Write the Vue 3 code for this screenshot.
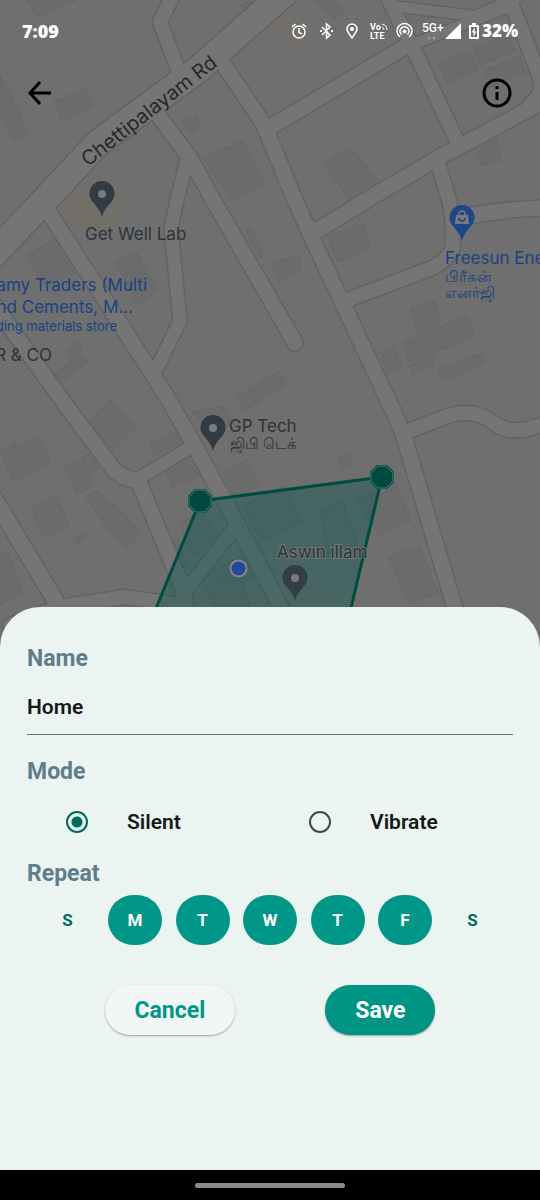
<script setup>
import { ref } from 'vue'

const name = ref('Home')
const mode = ref('silent')
const days = ref([
  { key: 'sun', letter: 'S', label: 'Sunday', on: false },
  { key: 'mon', letter: 'M', label: 'Monday', on: true },
  { key: 'tue', letter: 'T', label: 'Tuesday', on: true },
  { key: 'wed', letter: 'W', label: 'Wednesday', on: true },
  { key: 'thu', letter: 'T', label: 'Thursday', on: true },
  { key: 'fri', letter: 'F', label: 'Friday', on: true },
  { key: 'sat', letter: 'S', label: 'Saturday', on: false },
])

// Road centre lines with their widths
const roads = [
  { w: 26, d: 'M-10 258L45 200L98 143L200 68L290 -12' },
  { w: 14, d: 'M173 -5L160 22L179 72' },
  { w: 15, d: 'M226 68L263 123L295 200L312 238L388 400Q400 425 405 440L456 612' },
  { w: 15, d: 'M272 126L403 48' },
  { w: 14, d: 'M384 -10L414 50L457 141' },
  { w: 10, d: 'M392 6L475 16L520 -4' },
  { w: 11, d: 'M414 44L510 6' },
  { w: 14, d: 'M508 -5L541 80Q544 94 530 105' },
  { w: 15, d: 'M316 231L380 192L440 157L548 99' },
  { w: 14, d: 'M438 163L449 200Q454 220 453 244Q452 258 432 268L350 299' },
  { w: 15, d: 'M453 219Q500 209 545 208' },
  { w: 15, d: 'M160 118L190 158L213 200L278 313L295 343' },
  { w: 13, d: 'M187 160L177 200L171 228L180 321L158 366' },
  { w: 15, d: 'M50 214L169 400L230 510L285 615' },
  { w: 15, d: 'M-8 302L62 400L108 462Q120 480 138 480L165 545L184 592L186 612' },
  { w: 12, d: 'M138 479L194 445' },
  { w: 13, d: 'M182 595L238 524' },
  { w: 16, d: 'M-8 495L55 600' },
  { w: 14, d: 'M10 625L60 607L125 597L180 605' },
  { w: 14, d: 'M404 433L442 418Q472 406 494 423Q512 438 548 422' },
]

const buildings = [
  '26,0 76,0 38,17', '54,102 86,88 94,107 62,121', '8,129 23,122 28,135 14,142', '0,76 23,119 8,127 0,115',
  '183,121 196,114 201,126 189,133', '203,158 242,141 264,184 231,200', '313,-3 332,-3 344,12 334,19',
  '439,63 470,51 478,69 447,83', '474,48 508,34 515,51 481,65', '484,70 520,56 525,72 489,87',
  '324,164 349,146 381,183 351,202', '475,147 496,139 501,160 481,166',
  '26,257 55,238 78,272 45,286', '115,262 135,250 158,291 138,304', '67,350 76,341 83,348 79,355 88,361 63,384 55,374 73,359',
  '327,235 364,224 371,248 337,262', '272,264 298,254 301,261 299,272 279,281', '380,352 393,345 402,367 387,373',
  '411,308 434,300 442,322 418,335', '403,343 467,315 475,337 409,362', '409,366 432,357 434,365 413,375', '437,370 481,353 484,363 442,381',
  '236,397 279,371 287,384 245,410', '88,422 111,400 137,425 112,450', '150,444 182,430 188,441 154,455',
  '0,452 15,441 17,447 39,437 51,463 13,481', '64,466 82,457 93,485 77,494', '82,457 92,453 99,469 88,474',
  '31,507 56,496 63,511 37,524', '37,524 63,511 69,526 44,537', '86,497 97,490 125,515 141,534 127,547 108,529',
  '72,541 83,534 86,539 76,545', '0,555 8,551 23,593 0,605', '165,469 195,454 203,474 172,488',
  '192,412 223,406 232,424 214,433', '223,473 247,459 260,486 234,497', '338,458 349,454 352,466 342,470',
  '180,524 200,511 220,535 193,558', '167,545 178,540 187,567 177,571', '320,508 343,502 358,545 327,556',
  '355,500 395,483 411,521 380,535', '389,557 420,546 438,593 409,604', '207,574 252,550 258,572 218,597',
  '243,505 284,486 304,523 260,541', '205,589 240,570 250,607 215,612', '240,5 262,0 270,8 255,12',
  '246,230 252,230 264,257 260,259',
]

const pins = [
  { x: 102, y: 217, c: '#303b43' },
  { x: 213, y: 451, c: '#303b43' },
  { x: 295, y: 601, c: '#323d44' },
]
</script>

<template>
  <div class="screen">
    <svg class="map" viewBox="0 0 540 660" preserveAspectRatio="xMidYMin slice" role="img" aria-label="Map">
      <rect width="540" height="660" fill="#6f6f6f" />
      <g fill="#6b6b6b" stroke="#676767">
        <polygon v-for="b in buildings" :key="b" :points="b" />
      </g>
      <path d="M268 25L284 10L306 32L294 50Z" fill="#726e68" />
      <path d="M60 207L90 182L120 192L121 225L78 233Z" fill="#726f69" />
      <g fill="none" stroke="#636363" stroke-linecap="round" stroke-linejoin="round">
        <path v-for="r in roads" :key="r.d" :d="r.d" :stroke-width="r.w + 3" />
      </g>
      <g fill="none" stroke="#757575" stroke-linecap="round" stroke-linejoin="round">
        <path v-for="r in roads" :key="r.d" :d="r.d" :stroke-width="r.w" />
      </g>

      <path d="M200 501L382 477L341 650L139 650Z" fill="#00534a" fill-opacity=".36" stroke="#004d40" stroke-width="3" />
      <g v-for="p in [[200, 501], [382, 477]]" :key="p[0]" :transform="`translate(${p[0]} ${p[1]})`">
        <path d="M-5 -12H5L12 -5V5L5 12H-5L-12 5V-5Z" fill="#00493f" />
        <path d="M-4 -11H4L11 -4V4L4 11H-4L-11 4V-4Z" fill="#00493f" stroke="#3f8075" />
      </g>
      <circle cx="238.500" cy="568.500" r="9" fill="#828894" />
      <circle cx="238.500" cy="568.500" r="7" fill="#23479a" />

      <g v-for="p in pins" :key="p.x" :transform="`translate(${p.x} ${p.y})`">
        <path d="M0 0C-2 -8 -6 -11 -10 -16A12.500 12.500 0 1 1 10 -16C6 -11 2 -8 0 0Z" :fill="p.c" />
        <circle cy="-23" r="4" fill="#777b7d" />
      </g>
      <g transform="translate(462 241)">
        <path d="M0 0C-2 -8 -6 -11 -10 -16A12.500 12.500 0 1 1 10 -16C6 -11 2 -8 0 0Z" fill="#1f4687" />
        <path d="M-6 -26H6L7 -17H-7Z" fill="#777b80" />
        <path d="M-3 -26V-27A3 3 0 0 1 3 -27V-26" fill="none" stroke="#777b80" stroke-width="1.500" />
        <path d="M-3 -23A3 3 0 0 0 3 -23" fill="none" stroke="#1f4687" stroke-width="1.500" />
      </g>

      <g class="labels">
        <text class="road-name" transform="translate(88 167) rotate(-38)">Chettipalayam Rd</text>
        <text x="85" y="240">Get Well Lab</text>
        <g class="shop">
          <text x="147" y="291" text-anchor="end">amy Traders (Multi</text>
          <text x="133" y="313" text-anchor="end">nd Cements, M...</text>
          <text class="small" x="117" y="331" text-anchor="end">ding materials store</text>
          <text x="445" y="264">Freesun Ene</text>
          <text class="tamil" x="445" y="282">பிரீசுன்</text>
          <text class="tamil" x="445" y="298">எனர்ஜி</text>
        </g>
        <text x="52" y="361" text-anchor="end">R &amp; CO</text>
        <text x="229" y="432">GP Tech</text>
        <text class="tamil" x="230" y="449">ஜிபி டெக்</text>
        <text class="halo" x="277" y="558">Aswin illam</text>
      </g>
    </svg>

    <header class="top">
      <div class="status">
        <span class="time">7:09</span>
        <div class="indicators">
          <div class="services">
            <svg width="16" height="18" viewBox="0 0 16 18" fill="none" stroke="#fff" stroke-width="1.500">
              <circle cx="8" cy="10" r="6" /><path d="M8 6V10.500L11 12M1 5L4.500 2M15 5L11.500 2" />
            </svg>
            <svg width="15" height="18" viewBox="0 0 15 18" fill="none" stroke="#fff" stroke-width="1.500">
              <path d="M3 5L11 13L7.500 16V2L11 5L3 13" /><path d="M1 9H3M12 9H14" stroke-width="2" />
            </svg>
            <svg width="12" height="18" viewBox="0 0 12 18" fill="none" stroke="#fff" stroke-width="1.500">
              <path d="M6 16C4 12.500 1 10 1 7A5 5 0 0 1 11 7C11 10 8 12.500 6 16Z" /><circle cx="6" cy="7" r="2" fill="#fff" stroke="none" />
            </svg>
            <svg class="volte" width="18" height="18" viewBox="0 0 18 18" fill="#fff">
              <text x="0" y="8">Vo</text><text x="0" y="17">LTE</text>
              <path d="M12 2Q17 3 17 8M12 5Q14 6 14 8" fill="none" stroke="#fff" />
            </svg>
          </div>
          <svg width="17" height="18" viewBox="0 0 17 18" fill="none" stroke="#fff" stroke-width="1.500">
            <path d="M4 15A7.500 7.500 0 1 1 13 15M5.500 12.500A4.500 4.500 0 1 1 11.500 12.500" /><circle cx="8.500" cy="9.500" r="2" fill="#fff" stroke="none" />
          </svg>
          <div class="cell">
            <svg class="network" width="24" height="20" viewBox="0 0 24 20" fill="#fff">
              <text x="1" y="11">5G+</text><circle cx="8" cy="17" r="1.500" fill="#999" /><circle cx="13" cy="17" r="1.500" fill="#999" />
            </svg>
            <svg width="16" height="18" viewBox="0 0 16 18"><path d="M0 17L16 1V17Z" fill="#fff" /></svg>
          </div>
          <div class="power">
            <svg width="10" height="18" viewBox="0 0 10 18">
              <path d="M3 1H7V3H9Q10 3 10 4V16Q10 17 9 17H1Q0 17 0 16V4Q0 3 1 3H3Z" fill="#fff" />
              <path d="M2 5H8V15H2Z" fill="#6b6b6b" /><path d="M6 5L2.500 10.500H4.500V15L7.500 9.500H5.500Z" fill="#fff" />
            </svg>
            <span class="percent">32%</span>
          </div>
        </div>
      </div>
      <nav class="bar">
        <button class="icon" type="button" aria-label="Back">
          <svg width="24" height="24" viewBox="0 0 24 24" fill="none" stroke="#000" stroke-width="3"><path d="M23 12H2M12 1L2 12L12 23" /></svg>
        </button>
        <button class="icon" type="button" aria-label="Information">
          <svg width="30" height="30" viewBox="0 0 30 30" fill="none" stroke="#000" stroke-width="3"><circle cx="15" cy="15" r="13" /><path d="M15 14V22M15 8V11" /></svg>
        </button>
      </nav>
    </header>

    <form class="sheet" @submit.prevent>
      <label class="heading" for="zone-name">Name</label>
      <input id="zone-name" v-model="name" class="field" type="text" />

      <fieldset class="group mode">
        <legend class="heading">Mode</legend>
        <div class="options">
          <label class="option"><input v-model="mode" type="radio" name="mode" value="silent" />Silent</label>
          <label class="option"><input v-model="mode" type="radio" name="mode" value="vibrate" />Vibrate</label>
        </div>
      </fieldset>

      <fieldset class="group repeat">
        <legend class="heading">Repeat</legend>
        <div class="days">
          <button
            v-for="day in days" :key="day.key" type="button" class="day" :class="{ on: day.on }"
            :aria-label="day.label" :aria-pressed="day.on" @click="day.on = !day.on"
          >{{ day.letter }}</button>
        </div>
      </fieldset>

      <div class="actions">
        <button class="action cancel" type="button">Cancel</button>
        <button class="action save" type="submit">Save</button>
      </div>
    </form>
    <div class="system"><span class="handle"></span></div>
  </div>
</template>

<style>
body { margin: 0; background: #000; }
</style>

<style scoped>
.screen {
  position: relative;
  display: flex;
  flex-direction: column;
  min-height: 100vh;
  overflow: hidden;
  background: #6f6f6f;
  font-family: Roboto, "Liberation Sans", sans-serif;
}
.screen * { box-sizing: border-box; }
.map { position: absolute; top: 0; left: 0; width: 100%; }
.labels { font: 400 17px Inter, "Noto Sans", sans-serif; fill: #2d3439; }
.labels .road-name { font-size: 20px; fill: #282828; }
.labels .shop { fill: #1a4283; }
.labels .small { font-size: 13px; }
.labels .tamil { font-size: 15px; }
.labels .halo { paint-order: stroke; stroke: #6f7777; stroke-width: 2px; }

.top { position: relative; color: #fff; }
.status { display: flex; align-items: center; justify-content: space-between; height: 62px; padding: 0 22px; }
.status svg { display: block; flex: none; }
.time { font: 800 18px/22px "Open Sans", sans-serif; }
.percent { font: 800 17px/22px "Open Sans", sans-serif; }
.indicators { display: flex; align-items: center; gap: 8px; }
.services { display: flex; gap: 12px; }
.cell { display: flex; align-items: center; }
.power { display: flex; align-items: center; gap: 3px; }
.volte { font: 700 9px Roboto, sans-serif; }
.network { font: 500 12px Roboto, sans-serif; }
.bar { display: flex; align-items: center; justify-content: space-between; height: 62px; padding: 0 28px; }
.icon { display: flex; padding: 0; border: 0; background: none; cursor: pointer; }

.sheet {
  position: relative;
  margin-top: auto;
  padding: 39px 27px 135px;
  border-radius: 40px 40px 0 0;
  background: #ebf4f1;
}
.heading { display: block; padding: 0; color: #607d8b; font-size: 23px; font-weight: 700; line-height: 26px; }
.field {
  display: block;
  width: 100%;
  height: 56px;
  margin-top: 7px;
  padding: 0;
  border: 0;
  border-bottom: 1px solid #657572;
  outline: 0;
  background: none;
  color: #151918;
  font: 600 21px Roboto, sans-serif;
}
.group { min-width: 0; margin: 0; padding: 0; border: 0; }
.mode { margin-top: 24px; }
.repeat { margin-top: 14px; }
.options { display: grid; grid-template-columns: 1fr 1fr; margin-top: 12px; }
.option {
  display: flex;
  align-items: center;
  gap: 39px;
  height: 50px;
  padding-left: 39px;
  color: #151918;
  font-size: 21px;
  font-weight: 600;
}
.option input {
  appearance: none;
  flex: none;
  width: 22px;
  height: 22px;
  margin: 0;
  border: 2px solid #3f4947;
  border-radius: 50%;
}
.option input:checked { border-color: #006a5d; background: radial-gradient(circle, #006a5d 5px, transparent 6px); }
.days { display: flex; justify-content: space-evenly; margin-top: 8px; }
.day {
  width: 54px;
  height: 50px;
  padding: 0;
  border: 0;
  border-radius: 25px;
  background: none;
  color: #00695c;
  font: 700 17px Roboto, sans-serif;
}
.day.on { background: #009688; color: #fff; }
.actions { display: flex; justify-content: center; gap: 90px; margin-top: 40px; }
.action {
  height: 50px;
  padding: 0 30px;
  border: 0;
  border-radius: 25px;
  box-shadow: 0 1px 2px #0005;
  font: 700 23px Roboto, sans-serif;
}
.cancel { background: #f2f6f5; color: #009688; }
.save { background: #009485; color: #fff; }
.system { position: relative; display: flex; align-items: center; justify-content: center; height: 30px; background: #000; }
.handle { width: 150px; height: 5px; border-radius: 3px; background: #8b8b8b; }
</style>
